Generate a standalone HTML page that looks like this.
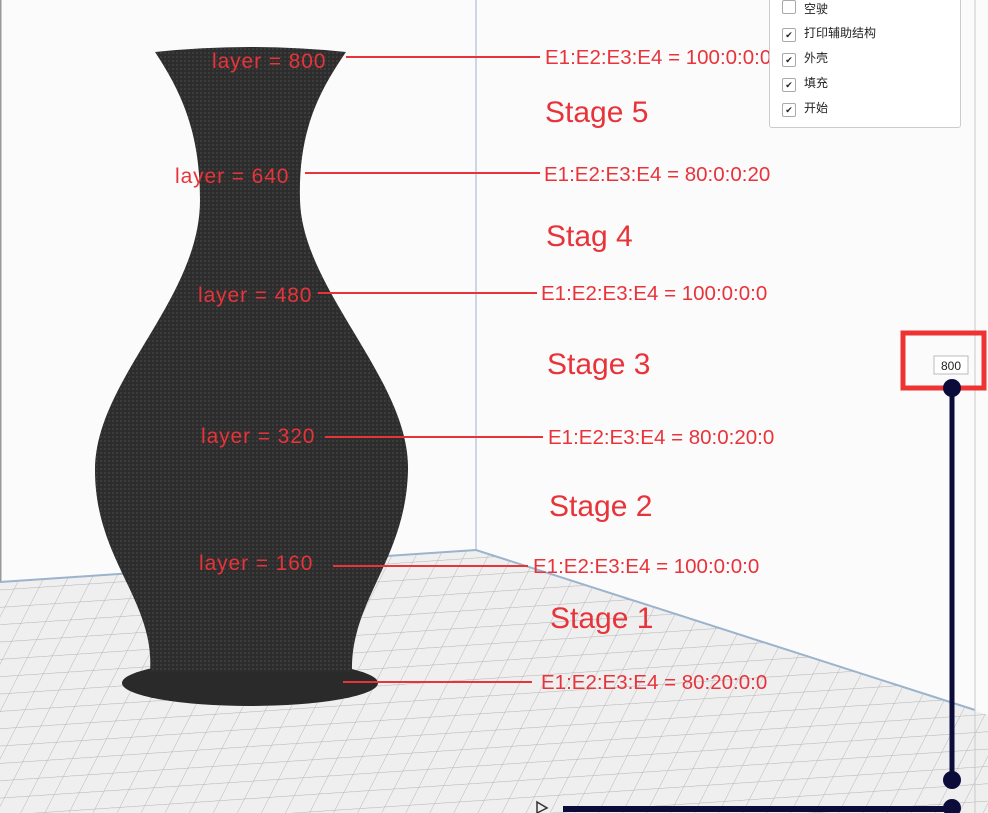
<!DOCTYPE html>
<html><head><meta charset="utf-8"><style>
body{margin:0;width:988px;height:813px;overflow:hidden;background:#fafafa;font-family:"Liberation Sans","Noto Sans CJK SC",sans-serif}
.t{position:absolute;color:#e8333a;font-size:20.5px;white-space:nowrap}
.l{font-size:21px;letter-spacing:0.9px}
.s{font-size:30px}
.p{position:absolute;left:769px;top:-6px;width:190px;height:132px;background:#fff;border:1px solid #ccc;border-radius:3px}
.r{position:absolute;left:12px;font-size:12px;color:#222;height:16px;line-height:16px}
.r b{display:inline-block;width:12px;height:12px;border:1px solid #aaa;border-radius:2px;vertical-align:-1px;margin-right:8px;font-size:9px;text-align:center;line-height:12px;font-weight:normal}
</style></head><body>
<svg width="988" height="813" style="position:absolute;left:0;top:0">
<defs><pattern id="g" width="24" height="18" patternUnits="userSpaceOnUse" patternTransform="skewX(-30) rotate(-4)"><rect width="24" height="18" fill="#efefef"/><path d="M0 0H24M0 0V18" stroke="#b5b5b5" stroke-width="1"/></pattern>
<pattern id="v" width="4" height="4" patternUnits="userSpaceOnUse"><rect width="4" height="4" fill="#2d2d2d"/><rect width="2" height="2" fill="#3c3c3c"/></pattern></defs>
<rect width="988" height="813" fill="#fbfbfb"/>
<line x1="0" y1="0" x2="0" y2="813" stroke="#999" stroke-width="3"/>
<line x1="476" y1="0" x2="476" y2="550" stroke="#9bb3cc" stroke-width="1"/>
<polygon points="0,582 476,550 988,715 988,813 0,813" fill="url(#g)"/>
<polyline points="0,582 476,550 975,710" fill="none" stroke="#9bb3cc" stroke-width="2"/>
<line x1="975" y1="0" x2="975" y2="813" stroke="#c8c8c8"/>
<ellipse cx="250" cy="683" rx="128" ry="23" fill="#2a2a2a"/>
<path d="M155,52 Q250,42 346,52 C320,90 298,130 300,200 C302,290 410,380 408,470 C406,560 350,600 352,672 L150,672 C155,600 95,560 95,470 C95,380 200,300 200,200 C200,130 180,90 155,52Z" fill="url(#v)"/>
<g stroke="#e8333a" stroke-width="2">
<line x1="346" y1="57" x2="540" y2="57"/>
<line x1="305" y1="173" x2="540" y2="173"/>
<line x1="318" y1="293" x2="537" y2="293"/>
<line x1="325" y1="437" x2="543" y2="437"/>
<line x1="333" y1="566" x2="528" y2="566"/>
<line x1="343" y1="682" x2="532" y2="682"/>
</g>
<rect x="903" y="333" width="81" height="55" fill="none" stroke="#ee3333" stroke-width="5"/>
<rect x="934" y="356" width="34" height="18" fill="#fff" stroke="#bbb"/>
<text x="951" y="370" font-size="12" text-anchor="middle" fill="#222" font-family="Liberation Sans">800</text>
<line x1="952" y1="388" x2="952" y2="780" stroke="#0c0c3a" stroke-width="5"/>
<circle cx="952" cy="388" r="9" fill="#0c0c3a"/>
<circle cx="952" cy="780" r="9" fill="#0c0c3a"/>
<line x1="563" y1="809" x2="952" y2="809" stroke="#0c0c3a" stroke-width="6"/>
<circle cx="952" cy="808" r="9" fill="#0c0c3a"/>
<path d="M537 802 L547 808 L537 813Z" fill="none" stroke="#333" stroke-width="1.5"/>
</svg>
<div class="t l" style="left:212px;top:50px">layer = 800</div>
<div class="t l" style="left:175px;top:165px">layer = 640</div>
<div class="t l" style="left:198px;top:284px">layer = 480</div>
<div class="t l" style="left:201px;top:425px">layer = 320</div>
<div class="t l" style="left:199px;top:552px">layer = 160</div>
<div class="t" style="left:545px;top:46px">E1:E2:E3:E4 = 100:0:0:0</div>
<div class="t" style="left:544px;top:163px">E1:E2:E3:E4 = 80:0:0:20</div>
<div class="t" style="left:541px;top:282px">E1:E2:E3:E4 = 100:0:0:0</div>
<div class="t" style="left:548px;top:426px">E1:E2:E3:E4 = 80:0:20:0</div>
<div class="t" style="left:533px;top:555px">E1:E2:E3:E4 = 100:0:0:0</div>
<div class="t" style="left:541px;top:671px">E1:E2:E3:E4 = 80:20:0:0</div>
<div class="t s" style="left:545px;top:96px">Stage 5</div>
<div class="t s" style="left:546px;top:220px">Stag 4</div>
<div class="t s" style="left:547px;top:348px">Stage 3</div>
<div class="t s" style="left:549px;top:490px">Stage 2</div>
<div class="t s" style="left:550px;top:602px">Stage 1</div>
<div class="p">
<div class="r" style="top:5px"><b></b>空驶</div>
<div class="r" style="top:30px"><b>✔</b>打印辅助结构</div>
<div class="r" style="top:55px"><b>✔</b>外壳</div>
<div class="r" style="top:80px"><b>✔</b>填充</div>
<div class="r" style="top:105px"><b>✔</b>开始</div>
</div>
</body></html>
